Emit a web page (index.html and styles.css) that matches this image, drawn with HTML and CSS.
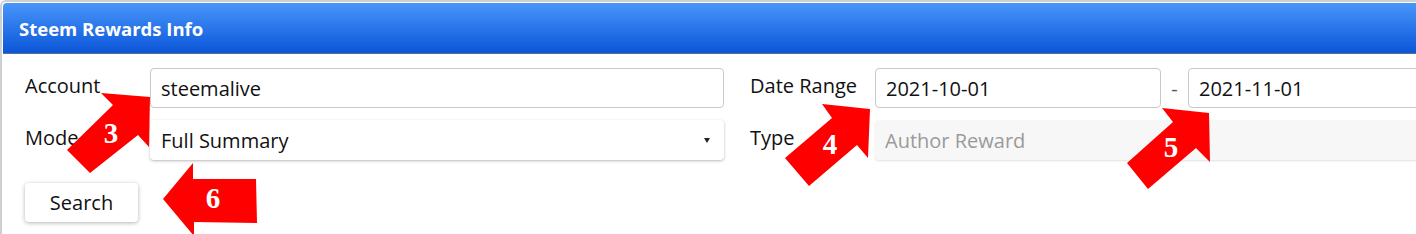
FILE: index.html
```html
<!DOCTYPE html>
<html lang="en">

<head>
    <meta charset="UTF-8">
    <meta name="viewport" content="width=device-width, initial-scale=1.0">
    <title>Steem Rewards Info</title>
    <link rel="stylesheet" href="styles.css">
</head>

<body>

    <div class="page">
        <div class="panel">
            <div class="panel-head">Steem Rewards Info</div>

            <div class="panel-body">
                <div class="form-grid">
                    <div class="field">
                        <label>Account</label>
                        <input class="box" type="text" value="steemalive">
                    </div>
                    <div class="field">
                        <label>Date Range</label>
                        <div class="range">
                            <input class="box" type="text" value="2021-10-01">
                            <span class="dash">-</span>
                            <input class="box" type="text" value="2021-11-01">
                        </div>
                    </div>
                    <div class="field">
                        <label>Mode</label>
                        <div class="select">
                            <span>Full Summary</span>
                            <span class="caret"></span>
                        </div>
                    </div>
                    <div class="field">
                        <label>Type</label>
                        <input class="box disabled" type="text" placeholder="Author Reward" disabled>
                    </div>
                </div>

                <button class="search">Search</button>
            </div>
        </div>

        <!-- red callout arrows drawn over the form -->
        <svg class="marks" width="1416" height="234" viewBox="0 0 1416 234">
            <polygon points="101,93 150,97 149,147 138,135 90,173 67,150 113,105" />
            <text x="111" y="143">3</text>

            <polygon points="822,104 870,109 868,158 857,145 809,186 785,158 832,118" />
            <text x="830" y="154">4</text>

            <polygon points="1162,108 1209,113 1210,162 1196,148 1148,189 1127,163 1173,122" />
            <text x="1171" y="157">5</text>

            <polygon points="163,199 193,163 193,179 256,179 257,223 194,222 194,236" />
            <text x="213" y="208">6</text>
        </svg>
    </div>

</body>

</html>
```

FILE: styles.css
```css
* {
    box-sizing: border-box;
}

body {
    margin: 0;
    font-family: 'Open Sans', 'Liberation Sans', sans-serif;
    font-size: 20px;
    color: #111;
    background: #fff;
    overflow: hidden;
}

.page {
    position: relative;
    width: 1416px;
    height: 234px;
    overflow: hidden;
}

.panel {
    width: 1520px;
    height: 260px;
    border: 2px solid #cfcfcf;
    border-radius: 6px;
    padding: 1px;
}

.panel-head {
    height: 51px;
    padding-left: 16px;
    display: flex;
    align-items: center;
    font-size: 18.5px;
    font-weight: bold;
    color: #fff;
    border-radius: 4px 4px 0 0;
    border-bottom: 1px solid #5d6f8e;
    background: linear-gradient(#4896fb, #0b55d8);
}

.panel-body {
    padding: 14px 22px 0 22px;
}

.form-grid {
    display: grid;
    grid-template-columns: 699px 724px;
    column-gap: 26px;
    row-gap: 12px;
}

.field {
    display: flex;
    align-items: flex-start;
}

.field label {
    width: 125px;
    flex-shrink: 0;
    line-height: 27px;
    padding-top: 4px;
}

.box {
    flex: 1;
    height: 40px;
    padding: 0 10px;
    font-family: inherit;
    font-size: 20px;
    color: #111;
    border: 1px solid #c8c8c8;
    border-radius: 4px;
    background: #fff;
    outline: none;
}

.box.disabled {
    border: none;
    background: #f7f7f7;
    box-shadow: 0 1px 2px rgba(0, 0, 0, 0.12);
}

.box.disabled::placeholder {
    color: #9a9a9a;
}

.range {
    display: flex;
    align-items: center;
}

.range .box {
    flex: none;
    width: 286px;
}

.dash {
    width: 27px;
    text-align: center;
    color: #555;
}

.select {
    flex: 1;
    height: 40px;
    padding: 0 14px 0 11px;
    display: flex;
    align-items: center;
    justify-content: space-between;
    border-radius: 4px;
    background: #fff;
    box-shadow: 0 1px 3px rgba(0, 0, 0, 0.28);
}

.caret {
    width: 0;
    height: 0;
    border-left: 3.5px solid transparent;
    border-right: 3.5px solid transparent;
    border-top: 5px solid #222;
}

.search {
    margin-top: 23px;
    width: 113px;
    height: 39px;
    font-family: inherit;
    font-size: 20px;
    color: #111;
    border: none;
    border-radius: 4px;
    background: #fff;
    box-shadow: 0 1px 4px rgba(0, 0, 0, 0.3);
}

.marks {
    position: absolute;
    top: 0;
    left: 0;
    pointer-events: none;
}

.marks polygon {
    fill: #ff0000;
}

.marks text {
    fill: #fff;
    font-family: 'Liberation Serif', serif;
    font-weight: bold;
    font-size: 29px;
    text-anchor: middle;
}
```
